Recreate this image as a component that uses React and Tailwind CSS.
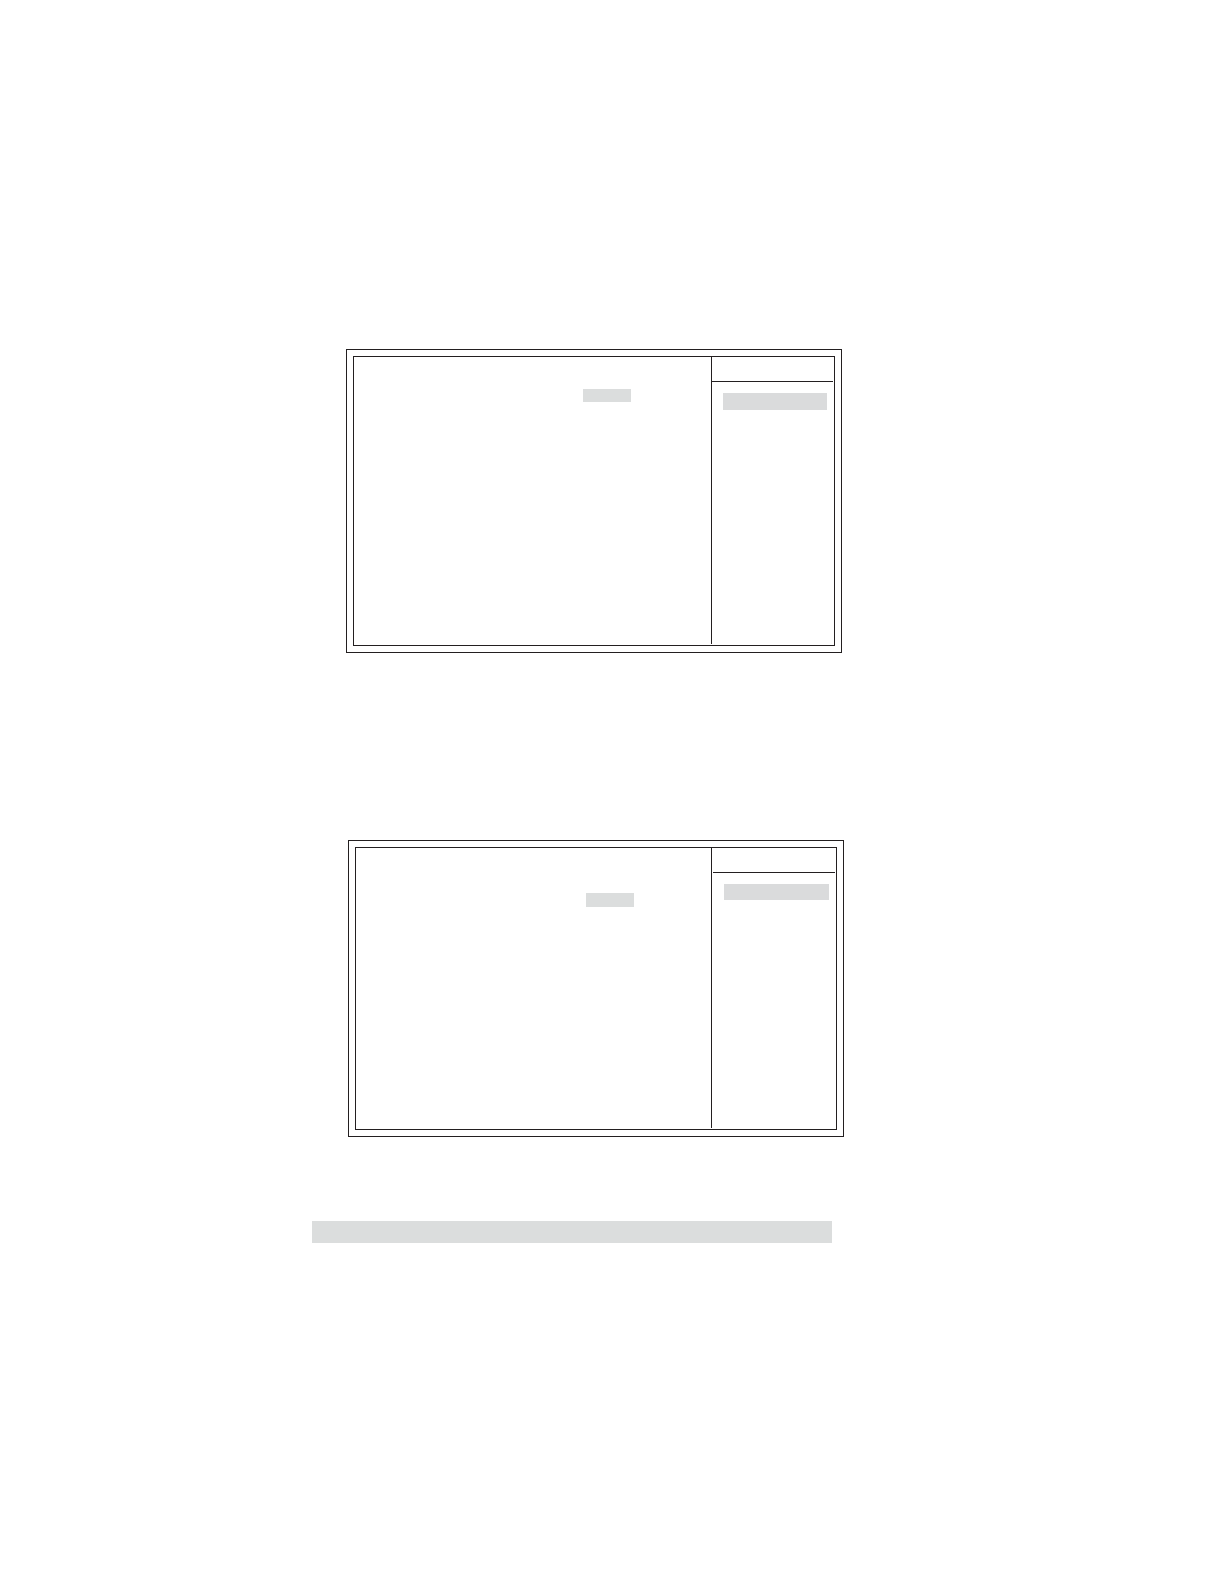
function Panel({ label, className, bodyClass, asideClass, titleClass, itemClass, valueClass }) {
  return (
    <section aria-label={label} className={`mr-0 border border-[#231f20] p-1.5 ${className}`}>
      <div className={`flex border border-[#231f20] ${bodyClass}`}>
        <div className="flex-1">
          <div className={`ml-auto w-12 bg-[#dbdddd] ${valueClass}`} />
        </div>
        <aside className={`mb-px border-l border-[#231f20] ${asideClass}`}>
          <div className={`mr-px h-[25px] border-b border-[#231f20] ${titleClass}`} />
          <div className={`mt-[11px] mr-[7px] bg-[#dadbdc] ${itemClass}`} />
        </aside>
      </div>
    </section>
  );
}

export default function App() {
  return (
    <main className="min-h-screen bg-white pt-[349px] pr-[380px] pb-16 pl-[312px]">
      <Panel
        label="First setup screen"
        className="mr-0.5 ml-[34px]"
        bodyClass="min-h-[290px]"
        asideClass="w-[123px]"
        titleClass="ml-0"
        itemClass="ml-[11px] h-[17px]"
        valueClass="mt-8 mr-20 h-[13px]"
      />
      <Panel
        label="Second setup screen"
        className="mt-[187px] ml-9"
        bodyClass="min-h-[283px]"
        asideClass="w-[125px]"
        titleClass="ml-px"
        itemClass="ml-3 h-4"
        valueClass="mt-[45px] mr-[77px] h-3.5"
      />
      <div className="mt-[84px] mr-3 h-[22px] bg-[#dbdddd]" />
    </main>
  );
}
